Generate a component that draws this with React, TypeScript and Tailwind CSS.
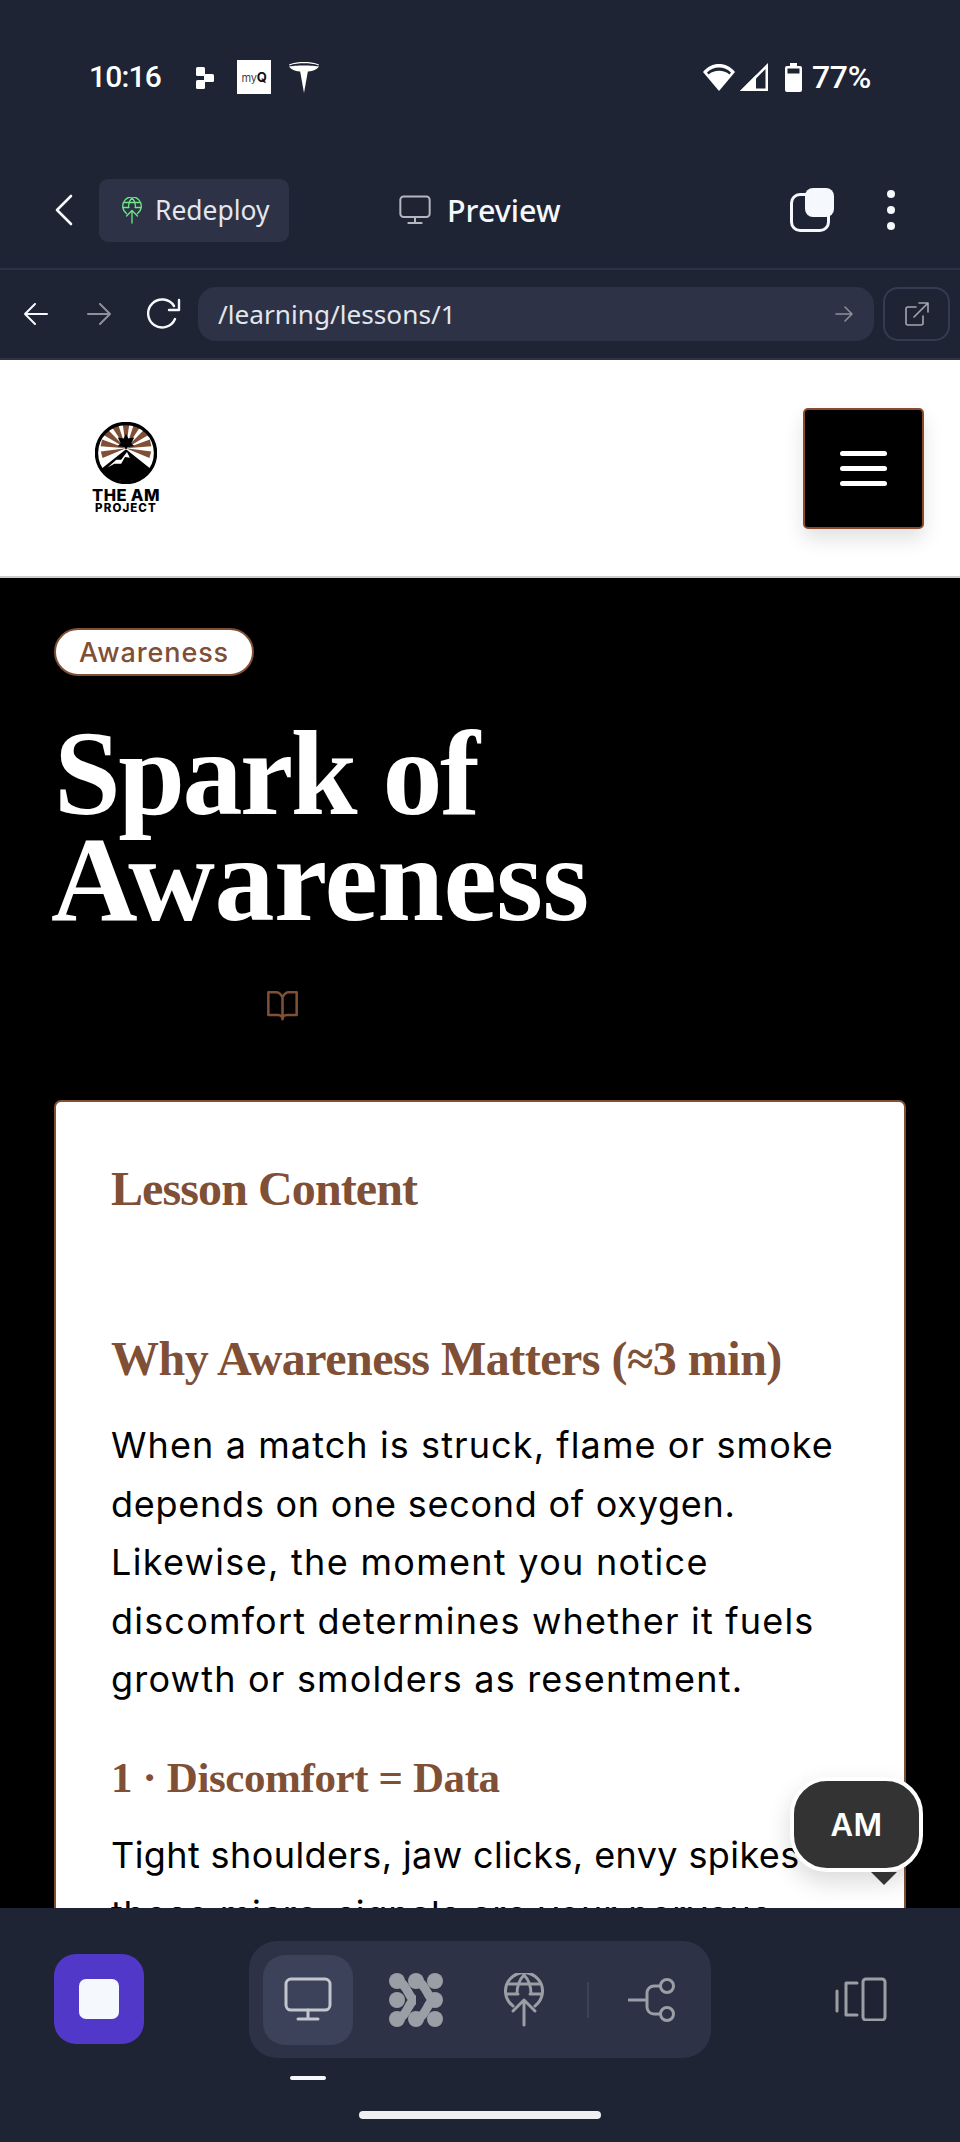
import React from "react";

const sans = "font-['Noto_Sans',sans-serif]";

function Logo() {
  const rays = [-105, -78, -52, -26, 0, 26, 52, 78, 105];
  return (
    <div className="flex flex-col items-center w-[68px]">
      <svg width="62" height="62" viewBox="0 0 64 64">
        <circle cx="32" cy="32" r="30" fill="#fff" />
        {rays.map((a) => (
          <path key={a} d="M32 27 L28.500 1 L35.500 1 Z" fill="#7f4f36" transform={`rotate(${a} 32 27)`} />
        ))}
        <circle cx="32" cy="32" r="30.500" fill="none" stroke="#000" strokeWidth="3.500" />
        <path d="M32 12l2.500 5 6-1-3 6 3 3-7 1-1.500 3-1.500-3-7-1 3-3-3-6 6 1z" fill="#000" />
        <path d="M7 48 L31 29 L33 29 L57 48 A30 30 0 0 1 7 48 Z" fill="#000" />
        <path d="M13 47 L22 39 L27 39 L33 31 L36 37 L31 36 L27 43 L20 43 Z" fill="#fff" />
      </svg>
      <div className="font-['Inter',sans-serif] font-extrabold text-black text-[16.500px] leading-[15px] mt-[4px] tracking-[0.400px] whitespace-nowrap">THE AM</div>
      <div className="font-['Inter',sans-serif] font-extrabold text-black text-[11.500px] leading-[11px] tracking-[1.100px] whitespace-nowrap">PROJECT</div>
    </div>
  );
}

function Monitor({ size, color, w = 2 }: { size: number; color: string; w?: number }) {
  return (
    <svg width={size} height={size * 0.92} viewBox="0 0 48 44" fill="none" stroke={color} strokeWidth={w * 48 / size} strokeLinecap="round" strokeLinejoin="round">
      <rect x="2" y="2" width="44" height="31" rx="5" />
      <path d="M24 33v9M14 42h20" />
    </svg>
  );
}

function GlobeUp({ size, color, w }: { size: number; color: string; w: number }) {
  return (
    <svg width={size} height={size * 1.35} viewBox="0 0 40 54" fill="none" stroke={color} strokeWidth={w} strokeLinecap="round" strokeLinejoin="round">
      <path d="M9 33A18.500 18.500 0 1 1 31 33" />
      <path d="M2 21h12M26 21h12M13 21C13 12 16 6 20 2c4 4 7 10 7 19" />
      <path d="M5 11h30" />
      <path d="M20 52V27M9 38l11-11 11 11" />
    </svg>
  );
}

export default function App() {
  return (
    <div className="relative w-[960px] h-[2142px] flex flex-col overflow-hidden bg-[#1e2433]">
      {/* status bar */}
      <div className="h-[154px] shrink-0 pt-[55px] pl-[89px] pr-[89px] flex items-start justify-between">
        <div className="flex items-center h-[44px]">
          <span className="font-['Roboto',sans-serif] font-medium text-[30px] tracking-[-0.800px] leading-none text-white w-[106px]">10:16</span>
          <svg width="20" height="24" viewBox="0 0 20 24" fill="#fff" className="mr-[22px] mt-[1px]">
            <rect x="1" y="1" width="9" height="9" rx="1.500" />
            <rect x="9" y="8" width="10" height="8" rx="1.500" />
            <rect x="1" y="14" width="9" height="9" rx="1.500" />
          </svg>
          <div className="w-[34px] h-[34px] bg-white flex items-center justify-center mr-[17px]">
            <span className="font-['Inter',sans-serif] text-[11px] leading-none text-[#444] tracking-[-0.300px]">my<b className="text-[#111] text-[13px]">Q</b></span>
          </div>
          <svg width="32" height="31" viewBox="0 0 32 31" fill="#fff">
            <path d="M1 4.500C6 3 26 3 31 4.500C29 7.500 25 9 20.500 9.500C19.500 8.500 12.500 8.500 11.500 9.500C7 9 3 7.500 1 4.500Z" />
            <path d="M12 8.500L16 31L20 8.500C18 8 14 8 12 8.500Z" />
            <path d="M1 2.400C6 .500 11 0 16 0s10 .500 15 2.400L30.500 3.400C26 1.800 21 1.300 16 1.300S6 1.800 1.500 3.400Z" />
          </svg>
        </div>
        <div className="flex items-center h-[44px] text-white">
          <svg width="34" height="30" viewBox="0 0 34 30" className="mr-[3px]" fill="#fff">
            <path d="M17 29L1 10C5.500 4.500 11 2 17 2s11.500 2.500 16 8z" />
            <path d="M5 10.500C8.500 7 12.500 5.500 17 5.500S25.500 7 29 10.500L27.500 12.500C24.500 10 21 8.800 17 8.800S9.500 10 6.500 12.500z" fill="#1e2433" />
          </svg>
          <svg width="30" height="30" viewBox="0 0 30 30" className="mr-[15px]">
            <path d="M1 29L29 1V29Z" fill="#fff" />
            <path d="M17 16.500L26.500 7V26.500H17Z" fill="#1e2433" />
            <path d="M1 29L17 13V29Z" fill="#fff" />
          </svg>
          <svg width="19" height="30" viewBox="0 0 19 30" fill="#fff" className="mr-[9px]">
            <path d="M6 1h7v3h3.500A2 2 0 0 1 18 6v22a2 2 0 0 1-2 2H3a2 2 0 0 1-2-2V6a2 2 0 0 1 2-2h3z" />
            <rect x="3.500" y="6.500" width="12" height="5" fill="#1e2433" />
          </svg>
          <span className="font-['Roboto',sans-serif] font-medium text-[32px] tracking-[-0.300px] leading-none">77%</span>
        </div>
      </div>

      {/* header */}
      <div className="h-[116px] shrink-0 border-b-2 border-[#2d3246] flex items-center pb-[2px] pl-[54px]">
        <svg width="20" height="32" viewBox="0 0 20 32" fill="none" stroke="#f5f8fc" strokeWidth="2.600" strokeLinecap="round" strokeLinejoin="round" className="mr-[25px]">
          <path d="M17 2L3 16l14 14" />
        </svg>
        <div className={`w-[190px] h-[63px] bg-[#2d3246] rounded-[9px] flex items-center pl-[23px] ${sans}`}>
          <GlobeUp size={20} color="#6ee787" w={2.600} />
          <span className="ml-[13px] text-[26.400px] leading-none text-[#e3e6ec]">Redeploy</span>
        </div>
        <div className="ml-[110px] w-[162px] flex items-center">
          <Monitor size={32} color="#b4b7bf" />
          <span className={`ml-[16px] text-[30.500px] leading-none font-medium text-[#f5f8fc] ${sans}`}>Preview</span>
        </div>
        <div className="ml-[229px] relative w-[44px] h-[44px]">
          <div className="absolute left-0 bottom-0 w-[40px] h-[39px] border-[3px] border-[#f5f8fc] rounded-[10px]" />
          <div className="absolute right-0 top-0 w-[29px] h-[29px] bg-[#f5f8fc] rounded-[8px]" />
        </div>
        <div className="ml-[53px] flex flex-col gap-[8px]">
          <div className="w-[8px] h-[8px] rounded-full bg-[#f5f8fc]" />
          <div className="w-[8px] h-[8px] rounded-full bg-[#f5f8fc]" />
          <div className="w-[8px] h-[8px] rounded-full bg-[#f5f8fc]" />
        </div>
      </div>

      {/* url row */}
      <div className="h-[90px] shrink-0 flex items-start pt-[17px] pl-[24px] border-b-2 border-[#2d3246]">
        <svg width="24" height="22" viewBox="0 0 24 22" fill="none" stroke="#f5f8fc" strokeWidth="2" strokeLinecap="round" strokeLinejoin="round" className="mt-[16px] mr-[39px]">
          <path d="M23 11H1M11 1L1 11l10 10" />
        </svg>
        <svg width="24" height="22" viewBox="0 0 24 22" fill="none" stroke="#8e9199" strokeWidth="2" strokeLinecap="round" strokeLinejoin="round" className="mt-[16px] mr-[36px]">
          <path d="M1 11h22M13 1l10 10-10 10" />
        </svg>
        <svg width="34" height="32" viewBox="0 0 34 32" fill="none" stroke="#f5f8fc" strokeWidth="2.400" strokeLinecap="round" strokeLinejoin="round" className="mt-[11px] mr-[17px]">
          <path d="M28 21a14 14 0 1 1-1-13M32 2v10H22" />
        </svg>
        <div className={`w-[676px] h-[54px] bg-[#2d3246] rounded-[18px] flex items-center justify-between pl-[20px] pr-[21px] ${sans}`}>
          <span className="text-[26.200px] leading-none text-[#e3e6ec]">/learning/lessons/1</span>
          <svg width="18" height="18" viewBox="0 0 18 18" fill="none" stroke="#8e9199" strokeWidth="1.500" strokeLinecap="round" strokeLinejoin="round">
            <path d="M1 9h16M10 2l7 7-7 7" />
          </svg>
        </div>
        <div className="ml-[9px] w-[67px] h-[54px] border-2 border-[#353b50] rounded-[15px] flex items-center justify-center">
          <svg width="24" height="24" viewBox="0 0 24 24" fill="none" stroke="#a4a7af" strokeWidth="1.600" strokeLinecap="round" strokeLinejoin="round">
            <path d="M11 5H3a2 2 0 0 0-2 2v14a2 2 0 0 0 2 2h13a2 2 0 0 0 2-2v-7M9 15L23 1M14 1h9v9" />
          </svg>
        </div>
      </div>

      {/* page */}
      <div className="relative flex-1 min-h-0 overflow-hidden bg-black">
        <div className="h-[218px] bg-white border-b-2 border-[#cccccc] flex items-start justify-between pl-[92px] pr-[36px]">
          <div className="pt-[62px]"><Logo /></div>
          <div className="mt-[48px] w-[121px] h-[121px] bg-black border-2 border-[#8b4a2b] rounded-[5px] shadow-[0_10px_20px_rgba(0,0,0,0.120)] flex flex-col items-center justify-center gap-[10px]">
            <div className="w-[47px] h-[5px] rounded-full bg-white" />
            <div className="w-[47px] h-[5px] rounded-full bg-white" />
            <div className="w-[47px] h-[5px] rounded-full bg-white" />
          </div>
        </div>
        <div className="px-[54px] pt-[50px]">
          <div className="w-[200px] h-[48px] bg-white border-2 border-[#7f4f36] rounded-full flex items-center justify-center font-['Inter',sans-serif] font-medium text-[27px] tracking-[0.900px] leading-none text-[#7f4f36]">Awareness</div>
          <h1 className="mt-[45px] font-['Liberation_Serif',serif] font-bold text-white text-[120px] leading-[106px]">
            <span className="tracking-[-2.500px]">Spark of</span><br /><span className="-ml-[3px] tracking-[-0.500px]">Awareness</span>
          </h1>
          <div className="mt-[55px] ml-[211px] h-[34px]">
            <svg width="35" height="34" viewBox="0 0 24 24" fill="none" stroke="#7f4f36" strokeWidth="1.800" strokeLinecap="round" strokeLinejoin="round">
              <path d="M12 6.500C11 4.500 9.500 3 7.500 3H2v16h7c1.700 0 3 1.300 3 3 0-1.700 1.300-3 3-3h7V3h-5.500C14.500 3 13 4.500 12 6.500zM12 6.500V22" />
            </svg>
          </div>
          <div className="mt-[78px] h-[1000px] bg-white border-2 border-[#7f4f36] rounded-[7px] pl-[55px] pt-[57px]">
            <h2 className="font-['Liberation_Serif',serif] font-bold text-[#7f4f36] text-[48px] leading-[60px] tracking-[-0.900px]">Lesson Content</h2>
            <h3 className="mt-[110px] font-['Liberation_Serif',serif] font-bold text-[#7f4f36] text-[48px] leading-[60px] tracking-[-0.500px] whitespace-nowrap">Why Awareness Matters (≈3 min)</h3>
            <div className="mt-[27px] font-['Inter',sans-serif] text-black text-[36px] leading-[58.600px] whitespace-nowrap">
              <p className="tracking-[1.100px]">When a match is struck, flame or smoke</p>
              <p className="tracking-[0.750px]">depends on one second of oxygen.</p>
              <p className="tracking-[1.300px]">Likewise, the moment you notice</p>
              <p className="tracking-[1.200px]">discomfort determines whether it fuels</p>
              <p className="tracking-[1.200px]">growth or smolders as resentment.</p>
            </div>
            <h4 className="mt-[41px] font-['Liberation_Serif',serif] font-bold text-[#7f4f36] text-[43px] leading-[56px] tracking-[-0.400px]">1 · Discomfort = Data</h4>
            <div className="mt-[20px] font-['Inter',sans-serif] text-black text-[36px] leading-[58.600px] whitespace-nowrap">
              <p className="tracking-[0.400px]">Tight shoulders, jaw clicks, envy spikes</p>
              <p className="tracking-[0.750px]">these micro-signals are your nervous</p>
            </div>
          </div>
        </div>

        {/* chat bubble */}
        <div className="absolute right-[37px] bottom-[36px] w-[133px] h-[95px] bg-[#333333] border-4 border-white rounded-[37px] shadow-[0_10px_25px_rgba(0,0,0,0.150)] flex items-center justify-center font-['Inter',sans-serif] font-semibold text-[31px] tracking-[0.500px] leading-none text-white">AM</div>
        <div className="absolute left-[871px] bottom-[23px] w-0 h-0 border-l-[13px] border-r-[13px] border-t-[13px] border-l-transparent border-r-transparent border-t-[#333333]" />
      </div>

      {/* bottom bar */}
      <div className="h-[234px] shrink-0 relative">
        <div className="flex items-start pl-[54px] pt-[33px]">
          <div className="mt-[13px] w-[90px] h-[90px] bg-[#5138c9] rounded-[22px] flex items-center justify-center">
            <div className="w-[40px] h-[40px] bg-[#f5f8fc] rounded-[7px]" />
          </div>
          <div className="ml-[105px] w-[462px] h-[117px] bg-[#2d3246] rounded-[28px] flex items-center pl-[14px]">
            <div className="w-[90px] h-[90px] bg-[#3b4259] rounded-[22px] flex items-center justify-center">
              <Monitor size={48} color="#c3c6cc" w={3} />
            </div>
            <svg width="54" height="54" viewBox="0 0 54 54" fill="#9a9ea5" className="ml-[36px]">
              <circle cx="8" cy="8" r="8" /><circle cx="27" cy="8" r="8" /><circle cx="46" cy="8" r="8" />
              <circle cx="8" cy="27" r="8" /><circle cx="46" cy="27" r="8" />
              <circle cx="8" cy="46" r="8" /><circle cx="27" cy="46" r="8" /><circle cx="46" cy="46" r="8" />
              <g fill="none" stroke="#9a9ea5" strokeWidth="9" strokeLinecap="round">
                <path d="M8 8C19 10 19 27 27 27C19 27 19 44 8 46" />
                <path d="M27 8C38 10 38 27 46 27C38 27 38 44 27 46" />
              </g>
            </svg>
            <div className="ml-[61px]"><GlobeUp size={40} color="#9a9ea5" w={3} /></div>
            <div className="ml-[43px] w-[2px] h-[36px] bg-[#3b4259]" />
            <svg width="48" height="44" viewBox="0 0 48 44" fill="none" stroke="#9a9ea5" strokeWidth="3" strokeLinecap="round" className="ml-[39px]">
              <path d="M1 22h18M32 8h-6a7 7 0 0 0-7 7v14a7 7 0 0 0 7 7h6" />
              <circle cx="39" cy="8" r="6.500" /><circle cx="39" cy="36" r="6.500" />
            </svg>
          </div>
          <svg width="52" height="44" viewBox="0 0 52 44" fill="none" stroke="#9a9ea5" strokeWidth="3" strokeLinecap="round" strokeLinejoin="round" className="ml-[124px] mt-[36px]">
            <path d="M2 14v20M22 6H11v32h11" />
            <rect x="28" y="2" width="22" height="41" rx="3" />
          </svg>
        </div>
        <div className="absolute left-[290px] top-[168px] w-[36px] h-[4px] rounded-full bg-[#f5f8fc]" />
        <div className="absolute left-[359px] top-[203px] w-[242px] h-[8px] rounded-full bg-[#eeeff2]" />
      </div>
    </div>
  );
}
